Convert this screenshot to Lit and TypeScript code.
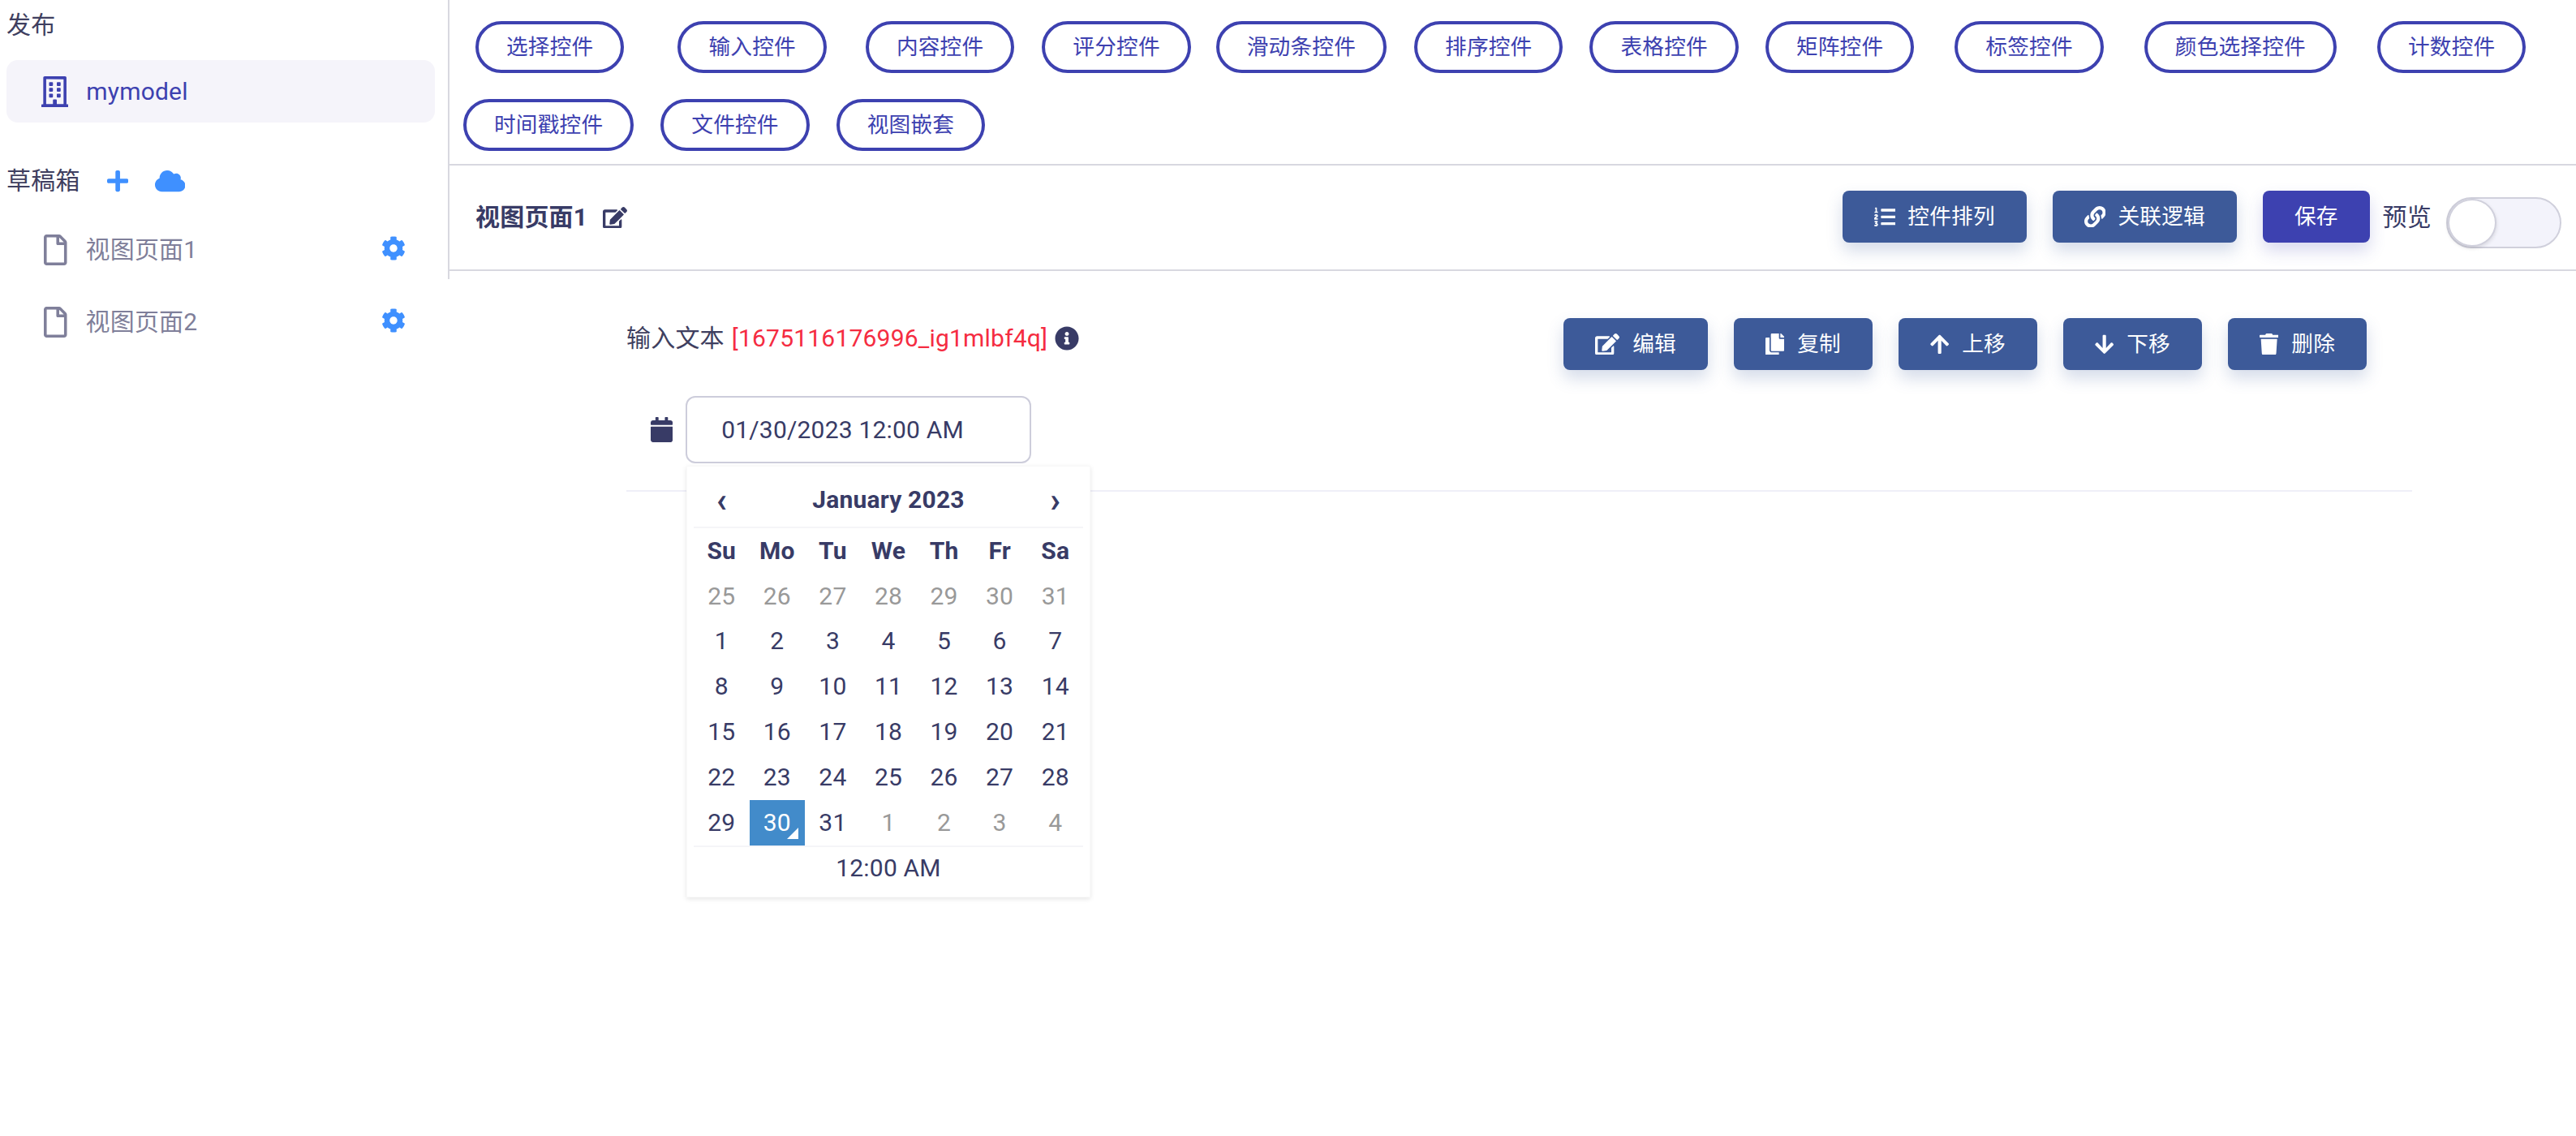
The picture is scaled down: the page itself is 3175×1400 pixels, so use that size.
import { LitElement, html, css, svg } from "lit";
import { customElement } from "lit/decorators.js";

const ICONS: Record<string, [number, string]> = {
  building: [448, "M128 148v-40c0-6.6 5.4-12 12-12h40c6.6 0 12 5.4 12 12v40c0 6.6-5.4 12-12 12h-40c-6.6 0-12-5.4-12-12zm140 12h40c6.6 0 12-5.4 12-12v-40c0-6.6-5.4-12-12-12h-40c-6.6 0-12 5.4-12 12v40c0 6.6 5.4 12 12 12zm-128 96h40c6.6 0 12-5.4 12-12v-40c0-6.6-5.4-12-12-12h-40c-6.6 0-12 5.4-12 12v40c0 6.6 5.4 12 12 12zm128 0h40c6.6 0 12-5.4 12-12v-40c0-6.6-5.4-12-12-12h-40c-6.6 0-12 5.4-12 12v40c0 6.6 5.4 12 12 12zm-76 84v-40c0-6.6-5.4-12-12-12h-40c-6.6 0-12 5.4-12 12v40c0 6.6 5.4 12 12 12h40c6.6 0 12-5.4 12-12zm76 12h40c6.6 0 12-5.4 12-12v-40c0-6.6-5.4-12-12-12h-40c-6.6 0-12 5.4-12 12v40c0 6.6 5.4 12 12 12zm180 124v36H0v-36c0-6.6 5.4-12 12-12h19.5V24c0-13.3 10.7-24 24-24h337c13.3 0 24 10.7 24 24v440H436c6.6 0 12 5.4 12 12zM79.5 463H192v-67c0-6.6 5.4-12 12-12h40c6.6 0 12 5.4 12 12v67h112.5V49L80 48l-.5 415z"],
  file: [384, "M369.9 97.9L286 14C277 5 264.8-.1 252.1-.1H48C21.5 0 0 21.5 0 48v416c0 26.5 21.5 48 48 48h288c26.5 0 48-21.5 48-48V131.9c0-12.7-5.1-25-14.1-34zM332.1 128H256V51.9l76.1 76.1zM48 464V48h160v104c0 13.3 10.7 24 24 24h104v288H48z"],
  plus: [448, "M416 208H272V64c0-17.67-14.33-32-32-32h-32c-17.67 0-32 14.33-32 32v144H32c-17.67 0-32 14.33-32 32v32c0 17.67 14.33 32 32 32h144v144c0 17.67 14.33 32 32 32h32c17.67 0 32-14.33 32-32V304h144c17.67 0 32-14.33 32-32v-32c0-17.67-14.33-32-32-32z"],
  cloud: [640, "M537.6 226.6c4.1-10.7 6.4-22.4 6.4-34.6 0-53-43-96-96-96-19.7 0-38.1 6-53.3 16.2C367 64.2 315.3 32 256 32c-88.4 0-160 71.6-160 160 0 2.7.1 5.4.2 8.1C40.2 219.8 0 273.2 0 336c0 79.5 64.5 144 144 144h368c70.7 0 128-57.3 128-128 0-61.9-44-113.6-102.4-125.4z"],
  cog: [512, "M487.4 315.7l-42.6-24.6c4.3-23.2 4.3-47 0-70.2l42.6-24.6c4.9-2.8 7.1-8.6 5.5-14-11.1-35.6-30-67.8-54.7-94.6-3.8-4.1-10-5.1-14.8-2.3L380.8 110c-17.9-15.4-38.5-27.3-60.8-35.1V25.8c0-5.6-3.9-10.5-9.4-11.7-36.7-8.2-74.3-7.8-109.2 0-5.5 1.2-9.4 6.1-9.4 11.7V75c-22.2 7.9-42.8 19.8-60.8 35.1L88.7 85.5c-4.9-2.8-11-1.9-14.8 2.3-24.7 26.7-43.6 58.9-54.7 94.6-1.7 5.4.6 11.2 5.5 14L67.3 221c-4.3 23.2-4.3 47 0 70.2l-42.6 24.6c-4.9 2.8-7.1 8.6-5.5 14 11.1 35.6 30 67.8 54.7 94.6 3.8 4.1 10 5.1 14.8 2.3l42.6-24.6c17.9 15.4 38.5 27.3 60.8 35.1v49.2c0 5.6 3.9 10.5 9.4 11.7 36.7 8.2 74.3 7.8 109.2 0 5.5-1.2 9.4-6.1 9.4-11.7v-49.2c22.2-7.9 42.8-19.8 60.8-35.1l42.6 24.6c4.9 2.8 11 1.9 14.8-2.3 24.7-26.7 43.6-58.9 54.7-94.6 1.5-5.5-.7-11.3-5.6-14.1zM256 336c-44.1 0-80-35.9-80-80s35.9-80 80-80 80 35.9 80 80-35.9 80-80 80z"],
  edit: [576, "M402.6 83.2l90.2 90.2c3.8 3.8 3.8 10 0 13.8L274.4 405.6l-92.8 10.3c-12.4 1.4-22.9-9.1-21.5-21.5l10.3-92.8L388.8 83.2c3.8-3.8 10-3.8 13.8 0zm162-22.9l-48.8-48.8c-15.2-15.2-39.9-15.2-55.2 0l-35.4 35.4c-3.8 3.8-3.8 10 0 13.8l90.2 90.2c3.8 3.8 10 3.8 13.8 0l35.4-35.4c15.2-15.3 15.2-40 0-55.2zM384 346.2V448H64V128h229.8c3.2 0 6.2-1.3 8.5-3.5l40-40c7.6-7.6 2.2-20.5-8.5-20.5H48C21.5 64 0 85.5 0 112v352c0 26.5 21.5 48 48 48h352c26.5 0 48-21.5 48-48V306.2c0-10.7-12.9-16-20.5-8.5l-40 40c-2.2 2.3-3.5 5.3-3.5 8.5z"],
  listol: [512, "M61.77 401l17.5-20.15a19.92 19.92 0 0 0 5.07-14.19v-3.31C84.34 356 80.5 352 73 352H16a8 8 0 0 0-8 8v16a8 8 0 0 0 8 8h22.83a157.41 157.41 0 0 0-11 12.31l-5.61 7c-4 5.07-5.25 10.13-2.8 14.88l1.05 1.93c3 5.76 6.29 7.88 12.25 7.88h4.73c10.33 0 15.94 2.44 15.94 9.09 0 4.72-4.2 8.22-14.36 8.22a41.54 41.54 0 0 1-15.47-3.12c-6.49-3.88-11.74-3.5-15.6 3.12l-5.59 9.31c-3.72 6.13-3.19 11.72 2.63 15.94 7.71 4.69 20.38 9.44 37 9.44 34.16 0 48.5-22.75 48.5-44.12-.03-14.38-9.12-29.76-28.73-34.88zM496 224H176a16 16 0 0 0-16 16v32a16 16 0 0 0 16 16h320a16 16 0 0 0 16-16v-32a16 16 0 0 0-16-16zm0-160H176a16 16 0 0 0-16 16v32a16 16 0 0 0 16 16h320a16 16 0 0 0 16-16V80a16 16 0 0 0-16-16zm0 320H176a16 16 0 0 0-16 16v32a16 16 0 0 0 16 16h320a16 16 0 0 0 16-16v-32a16 16 0 0 0-16-16zM16 160h64a8 8 0 0 0 8-8v-16a8 8 0 0 0-8-8H64V40a8 8 0 0 0-8-8H32a8 8 0 0 0-7.14 4.42l-8 16A8 8 0 0 0 24 64h8v64H16a8 8 0 0 0-8 8v16a8 8 0 0 0 8 8zm-3.91 160H80a8 8 0 0 0 8-8v-16a8 8 0 0 0-8-8H41.32c3.29-10.29 48.68-18.68 48.68-56.44 0-29.06-25-39.56-44.47-39.56-21.36 0-33.8 10-40.46 18.75-4.37 5.59-3 10.84 2.8 15.37l8.58 6.88c5.61 4.56 11 2.47 16.12-2.44a13.44 13.44 0 0 1 9.46-3.84c3.33 0 9.28 1.56 9.28 8.75C51 248.19 0 257.31 0 304.59v4C0 316 5.08 320 12.09 320z"],
  link: [512, "M326.612 185.391c59.747 59.809 58.927 155.698.36 214.59-.11.12-.24.25-.36.37l-67.2 67.2c-59.27 59.27-155.699 59.262-214.96 0-59.27-59.26-59.27-155.7 0-214.96l37.106-37.106c9.84-9.84 26.786-3.3 27.294 10.606.648 17.722 3.826 35.527 9.69 52.721 1.986 5.822.567 12.262-3.783 16.612l-13.087 13.087c-28.026 28.026-28.905 73.66-1.155 101.96 28.024 28.579 74.086 28.749 102.325.51l67.2-67.19c28.191-28.191 28.073-73.757 0-101.83-3.701-3.694-7.429-6.564-10.341-8.569a16.037 16.037 0 0 1-6.947-12.606c-.396-10.567 3.348-21.456 11.698-29.806l21.054-21.055c5.521-5.521 14.182-6.199 20.584-1.731a152.482 152.482 0 0 1 20.522 17.197zM467.547 44.449c-59.261-59.262-155.69-59.27-214.96 0l-67.2 67.2c-.12.12-.25.25-.36.37-58.566 58.892-59.387 154.781.36 214.59a152.454 152.454 0 0 0 20.521 17.196c6.402 4.468 15.064 3.789 20.584-1.731l21.054-21.055c8.35-8.35 12.094-19.239 11.698-29.806a16.037 16.037 0 0 0-6.947-12.606c-2.912-2.005-6.64-4.875-10.341-8.569-28.073-28.073-28.191-73.639 0-101.83l67.2-67.19c28.239-28.239 74.3-28.069 102.325.51 27.75 28.3 26.872 73.934-1.155 101.96l-13.087 13.087c-4.35 4.35-5.769 10.79-3.783 16.612 5.864 17.194 9.042 34.999 9.69 52.721.509 13.906 17.454 20.446 27.294 10.606l37.106-37.106c59.271-59.259 59.271-155.699.001-214.959z"],
  calendar: [448, "M12 192h424c6.6 0 12 5.4 12 12v260c0 26.5-21.5 48-48 48H48c-26.5 0-48-21.5-48-48V204c0-6.6 5.4-12 12-12zm436-44v-36c0-26.5-21.5-48-48-48h-48V12c0-6.6-5.4-12-12-12h-40c-6.6 0-12 5.4-12 12v52H160V12c0-6.6-5.4-12-12-12h-40c-6.6 0-12 5.4-12 12v52H48C21.5 64 0 85.5 0 112v36c0 6.6 5.4 12 12 12h424c6.6 0 12-5.4 12-12z"],
  info: [512, "M256 8C119.043 8 8 119.083 8 256c0 136.997 111.043 248 248 248s248-111.003 248-248C504 119.083 392.957 8 256 8zm0 110c23.196 0 42 18.804 42 42s-18.804 42-42 42-42-18.804-42-42 18.804-42 42-42zm56 254c0 6.627-5.373 12-12 12h-88c-6.627 0-12-5.373-12-12v-24c0-6.627 5.373-12 12-12h12v-64h-12c-6.627 0-12-5.373-12-12v-24c0-6.627 5.373-12 12-12h64c6.627 0 12 5.373 12 12v100h12c6.627 0 12 5.373 12 12v24z"],
  copy: [448, "M320 448v40c0 13.255-10.745 24-24 24H24c-13.255 0-24-10.745-24-24V120c0-13.255 10.745-24 24-24h72v296c0 30.879 25.121 56 56 56h168zm0-344V0H152c-13.255 0-24 10.745-24 24v368c0 13.255 10.745 24 24 24h272c13.255 0 24-10.745 24-24V128H344c-13.2 0-24-10.8-24-24zm120.971-31.029L375.029 7.029A24 24 0 0 0 358.059 0H352v96h96v-6.059a24 24 0 0 0-7.029-16.97z"],
  up: [448, "M34.9 289.5l-22.2-22.2c-9.4-9.4-9.4-24.6 0-33.9L207 39c9.4-9.4 24.6-9.4 33.9 0l194.3 194.3c9.4 9.4 9.4 24.6 0 33.9L413 289.4c-9.5 9.5-25 9.3-34.3-.4L264 168.6V456c0 13.3-10.7 24-24 24h-32c-13.3 0-24-10.7-24-24V168.6L69.2 289.1c-9.3 9.8-24.8 10-34.3.4z"],
  down: [448, "M413.1 222.5l22.2 22.2c9.4 9.4 9.4 24.6 0 33.9L241 473c-9.4 9.4-24.6 9.4-33.9 0L12.7 278.6c-9.4-9.4-9.4-24.6 0-33.9l22.2-22.2c9.5-9.5 25-9.3 34.3.4L184 343.4V56c0-13.3 10.7-24 24-24h32c13.3 0 24 10.7 24 24v287.4l114.8-120.5c9.3-9.8 24.8-10 34.3-.4z"],
  trash: [448, "M432 32H312l-9.4-18.7A24 24 0 0 0 281.1 0H166.8a23.72 23.72 0 0 0-21.4 13.3L136 32H16A16 16 0 0 0 0 48v32a16 16 0 0 0 16 16h416a16 16 0 0 0 16-16V48a16 16 0 0 0-16-16zM53.2 467a48 48 0 0 0 47.9 45h245.8a48 48 0 0 0 47.9-45L416 128H32z"],
};

const icon = (name: string, cls = "") => {
  const [w, d] = ICONS[name];
  return html`<svg class="ico ${cls}" viewBox="0 0 ${w} 512" fill="currentColor" aria-hidden="true">${svg`<path d=${d}></path>`}</svg>`;
};

const ROW1: [string, number][] = [
  ["选择控件", 15], ["输入控件", 66], ["内容控件", 48], ["评分控件", 34], ["滑动条控件", 31], ["排序控件", 34],
  ["表格控件", 33], ["矩阵控件", 33], ["标签控件", 50], ["颜色选择控件", 50], ["计数控件", 50],
];
const ROW2: [string, number][] = [["时间戳控件", 0], ["文件控件", 33], ["视图嵌套", 33]];

const WEEK = ["Su", "Mo", "Tu", "We", "Th", "Fr", "Sa"];
const old1 = [25, 26, 27, 28, 29, 30, 31];
const cur = Array.from({ length: 31 }, (_, i) => i + 1);
const old2 = [1, 2, 3, 4];

@customElement("app-root")
export class AppRoot extends LitElement {
  static styles = css`
    :host {
      display: grid;
      grid-template-columns: 554px 1fr;
      min-height: 1400px;
      background: #fff;
      color: #383b66;
      font-family: Roboto, "Noto Sans CJK SC", sans-serif;
      font-size: 30px;
      line-height: 46px;
      letter-spacing: 0.2px;
    }
    .ico { height: 1em; display: block; flex: none; }

    .side { height: 344px; border-right: 2px solid #d8d8e0; padding-top: 8px; box-sizing: border-box; }
    .head { height: 46px; padding-left: 8px; display: flex; align-items: center; color: #3f3f60; }
    .head .plus, .head .cloud { color: #3f90ff; margin-left: 33px; }
    .active {
      margin: 20px 16px 49px 8px; height: 77px; border-radius: 14px; background: #f5f4fa;
      display: flex; align-items: center; padding-left: 43px; gap: 22px; color: #3d41b0;
    }
    .active .ico { height: 38px; }
    .files { margin-top: 17px; }
    .file { height: 89px; display: flex; align-items: center; padding: 0 52px 0 54px; color: #7f7f9a; gap: 23px; }
    .file .doc { height: 38px; }
    .file .cog { margin-left: auto; color: #3f90ff; margin-top: -3px; }

    .main { min-width: 0; }
    .tools { box-sizing: border-box; padding: 26px 0 0 17px; border-bottom: 2px solid #d8d8e0; display: flex; flex-direction: column; gap: 32px; height: 204px; }
    .row { display: flex; }
    .pill {
      height: 64px; box-sizing: border-box; border: 4px solid #3d41b0; border-radius: 32px; padding: 0 34px;
      display: flex; align-items: center; font-size: 26.67px; color: #3d41b0; white-space: nowrap;
    }

    .bar { height: 130px; box-sizing: border-box; border-bottom: 2px solid #d8d8e0; padding: 0 18px 0 32px; display: flex; align-items: center; }
    .title { font-weight: 700; font-size: 30px; }
    .title-edit { margin-left: 19px; height: 26.67px; }
    .spacer { flex: 1; }
    .btn {
      height: 64px; box-sizing: border-box; border-radius: 8px; background: #3d5a99; color: #fff;
      display: flex; align-items: center; gap: 15px; padding: 0 39px; font-size: 26.67px;
      box-shadow: 0 10px 20px rgba(61, 90, 153, 0.22); white-space: nowrap;
    }
    .btn.save { background: #3d41b0; margin-left: 32px; box-shadow: 0 10px 20px rgba(61, 65, 176, 0.2); }
    .btn.gap { margin-left: 32px; }
    .bar .btn { margin-top: -2px; }
    .preview { margin-left: 16px; }
    .toggle {
      margin-left: 18px; margin-top: 12px; width: 142px; height: 63px; box-sizing: border-box;
      border: 2px solid #d0d0dc; border-radius: 32px; background: #f3f3fb; display: flex; align-items: center;
    }
    .knob { width: 60px; height: 59px; box-sizing: border-box; border-radius: 50%; background: #fff; border: 2px solid #d0d0dc; box-shadow: 0 2px 5px rgba(0, 0, 0, 0.12); }

    .content { padding: 58px 202px 0 218px; }
    .top { display: flex; justify-content: space-between; padding-right: 56px; height: 64px; }
    .label { display: flex; align-items: center; height: 46px; margin-top: 2px; color: #3f3f60; }
    .key { color: #f52c41; margin-left: 9px; }
    .label .ico { margin-left: 9px; color: #383b66; }
    .actions { display: flex; gap: 32px; }
    .actions .btn { gap: 16px; }
    .picker-row { display: flex; align-items: center; margin-top: 32px; padding-left: 30px; gap: 16px; position: relative; }
    .cal-ico { height: 31px; }
    .input {
      width: 426px; height: 83px; box-sizing: border-box; border: 2px solid #cdcddb; border-radius: 12px;
      display: flex; align-items: center; padding-left: 42px; white-space: nowrap;
    }
    .rule { height: 2px; background: #efeff8; margin-top: 33px; }

    .popup {
      position: absolute; left: 74px; top: 86px; width: 498px; box-sizing: border-box; padding: 8px;
      background: #fff; border: 1px solid #f9f9f9; box-shadow: 0 2px 6px rgba(0, 0, 0, 0.1); z-index: 2;
    }
    .cal-head { height: 68px; box-sizing: border-box; display: flex; align-items: center; justify-content: space-between; border-bottom: 2px solid #f5f5f8; font-weight: 700; }
    .cal-head span { width: 68.57px; text-align: center; }
    .cal-head .month { flex: 1; }
    .cal-head .nav { font-size: 42px; font-weight: 700; margin-top: 2px; }
    .grid { display: grid; grid-template-columns: repeat(7, 1fr); grid-auto-rows: 55.8px; }
    .cell { display: flex; align-items: center; justify-content: center; position: relative; }
    .dow { font-weight: 700; }
    .muted { color: #999; }
    .sel { background: #428bca; color: #fff; }
    .sel::before {
      content: ""; position: absolute; right: 8px; bottom: 8px; width: 0; height: 0;
      border-bottom: 14px solid #fff; border-left: 14px solid transparent;
    }
    .cal-foot { height: 55px; box-sizing: border-box; border-top: 2px solid #f5f5f8; display: flex; align-items: center; justify-content: center; }
  `;

  private pills(row: [string, number][]) {
    return html`<div class="row">
      ${row.map(([t, m]) => html`<div class="pill" style="margin-left:${m}px">${t}</div>`)}
    </div>`;
  }

  render() {
    return html`
      <aside class="side">
        <div class="head">发布</div>
        <div class="active">${icon("building")}<span>mymodel</span></div>
        <div class="head"><span>草稿箱</span>${icon("plus", "plus")}${icon("cloud", "cloud")}</div>
        <div class="files">
          ${["视图页面1", "视图页面2"].map(
            (t) => html`<div class="file">${icon("file", "doc")}<span>${t}</span>${icon("cog", "cog")}</div>`
          )}
        </div>
      </aside>
      <main class="main">
        <div class="tools">${this.pills(ROW1)}${this.pills(ROW2)}</div>
        <div class="bar">
          <span class="title">视图页面1</span>
          ${icon("edit", "title-edit")}
          <div class="spacer"></div>
          <div class="btn">${icon("listol")}<span>控件排列</span></div>
          <div class="btn gap">${icon("link")}<span>关联逻辑</span></div>
          <div class="btn save"><span>保存</span></div>
          <span class="preview">预览</span>
          <div class="toggle"><div class="knob"></div></div>
        </div>
        <div class="content">
          <div class="top">
            <div class="label">
              <span>输入文本</span><span class="key">[1675116176996_ig1mlbf4q]</span>${icon("info")}
            </div>
            <div class="actions">
              <div class="btn">${icon("edit")}<span>编辑</span></div>
              <div class="btn">${icon("copy")}<span>复制</span></div>
              <div class="btn">${icon("up")}<span>上移</span></div>
              <div class="btn">${icon("down")}<span>下移</span></div>
              <div class="btn">${icon("trash")}<span>删除</span></div>
            </div>
          </div>
          <div class="picker-row">
            ${icon("calendar", "cal-ico")}
            <div class="input">01/30/2023 12:00 AM</div>
            <div class="popup">
              <div class="cal-head"><span class="nav">‹</span><span class="month">January 2023</span><span class="nav">›</span></div>
              <div class="grid">
                ${WEEK.map((d) => html`<div class="cell dow">${d}</div>`)}
                ${old1.map((d) => html`<div class="cell muted">${d}</div>`)}
                ${cur.map((d) => html`<div class="cell ${d === 30 ? "sel" : ""}">${d}</div>`)}
                ${old2.map((d) => html`<div class="cell muted">${d}</div>`)}
              </div>
              <div class="cal-foot">12:00 AM</div>
            </div>
          </div>
          <div class="rule"></div>
        </div>
      </main>
    `;
  }
}
